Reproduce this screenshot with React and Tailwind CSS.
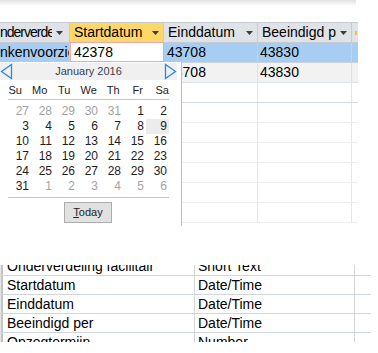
import React from "react";

const cols = [
    { w: "w-[70px]", head: "nderverdeling", first: true },
    { w: "w-[94px]", head: "Startdatum", active: true },
    { w: "w-[94px]", head: "Einddatum" },
    { w: "w-[94px]", head: "Beeindigd per" },
];

const weeks = [
    [27, 28, 29, 30, 31, 1, 2],
    [3, 4, 5, 6, 7, 8, 9],
    [10, 11, 12, 13, 14, 15, 16],
    [17, 18, 19, 20, 21, 22, 23],
    [24, 25, 26, 27, 28, 29, 30],
    [31, 1, 2, 3, 4, 5, 6],
];

const fields = [
    ["Onderverdeling facilitair", "Short Text"],
    ["Startdatum", "Date/Time"],
    ["Einddatum", "Date/Time"],
    ["Beeindigd per", "Date/Time"],
    ["Opzegtermijn", "Number"],
];

const SortArrow = () => (
    <svg width="7" height="4" viewBox="0 0 7 4" className="shrink-0">
        <path d="M0 0 L7 0 L3.5 4 Z" fill="#3c3c3c" />
    </svg>
);

const NavArrow = ({ dir }) => (
    <svg width="13" height="17" viewBox="0 0 13 17">
        {dir === "left" ? (
            <path d="M11.5 1.5 L1.5 8.5 L11.5 15.5 Z" fill="none" stroke="#2b88d8" strokeWidth="1.3" />
        ) : (
            <path d="M1.5 1.5 L11.5 8.5 L1.5 15.5 Z" fill="none" stroke="#2b88d8" strokeWidth="1.3" />
        )}
    </svg>
);

const Calendar = () => {
    return (
        <div className="absolute left-0 top-[62px] w-[182px] h-[164px] bg-white border-r border-[#bdbdbd] text-[#1c1c1c]">
            {/* month header */}
            <div className="mt-[1px] w-[177px] h-[17px] bg-[#f0f0f0] flex items-center justify-between">
                <NavArrow dir="left" />
                <span className="text-[11px] text-[#3f3f4f]">January 2016</span>
                <NavArrow dir="right" />
            </div>

            {/* day names */}
            <div className="ml-[3px] mt-[2px] grid grid-cols-[repeat(7,24.5px)] h-[16px] items-center text-[11px]">
                {["Su", "Mo", "Tu", "We", "Th", "Fr", "Sa"].map((d) => (
                    <span key={d} className="text-center">{d}</span>
                ))}
            </div>
            <div className="ml-[8px] mt-[1px] w-[161px] h-px bg-[#c4c4c4]" />

            {/* dates */}
            <div className="ml-[8px] mt-[4px] grid grid-cols-[repeat(7,23px)] text-[12px]">
                {weeks.map((week, wi) =>
                    week.map((day, di) => {
                        const muted = (wi === 0 && day > 20) || (wi === 5 && day < 10);
                        const selected = wi === 1 && di === 6;
                        return (
                            <span
                                key={`${wi}-${di}`}
                                className={`h-[15px] leading-[15px] text-right pr-[2px] ${muted ? "text-[#a3a3a3]" : ""} ${selected ? "bg-[#ececec]" : ""}`}
                            >
                                {day}
                            </span>
                        );
                    })
                )}
            </div>
            <div className="ml-[8px] mt-[3px] w-[161px] h-px bg-[#c4c4c4]" />

            {/* today button */}
            <div className="ml-[64px] mt-[4px] w-[48px] h-[21px] bg-[#e1e1e1] border border-[#adadad] flex items-center justify-center text-[11px]">
                <span><span className="underline">T</span>oday</span>
            </div>
        </div>
    );
};

export default function App() {
    return (
        <div className="relative w-[378px] h-[353px] bg-white overflow-hidden font-['Liberation_Sans',sans-serif] text-black">
            {/* window shadow */}
            <div className="h-[6px] w-[356px] bg-gradient-to-b from-[#e2e2e2] to-white" />
            <div className="h-[16px]" />

            {/* datasheet */}
            <div className="relative h-[204px] w-[358px] overflow-hidden">
                {/* header */}
                <div className="flex h-[21px] border-y border-[#c6cbd2] text-[14px]">
                    {cols.map((c) => (
                        <div
                            key={c.head}
                            className={`${c.w} flex items-center gap-[4px] border-r border-[#c6cbd2] ${c.active ? "bg-[#fdd868]" : "bg-[#dfe3e8]"} ${c.first ? "pl-0 pr-[6px]" : "pl-[4px] pr-[4px]"}`}
                        >
                            <span className={`flex-1 min-w-0 overflow-hidden whitespace-nowrap ${c.first ? "tracking-[-1px]" : ""}`}>
                                {c.head}
                            </span>
                            <SortArrow />
                        </div>
                    ))}
                    <div className="w-[6px] bg-[#dfe3e8] flex items-center">
                        <span className="ml-[3px] w-[2px] h-[4px] bg-[#f2c14e]" />
                    </div>
                </div>

                {/* selected row */}
                <div className="flex h-[20px] border-b border-[#c9d3df] text-[14px] bg-[#a7cef2]">
                    <div className="w-[70px] border-r border-[#c9d3df] overflow-hidden whitespace-nowrap flex items-center">
                        nkenvoorziening
                    </div>
                    <div className="w-[94px] bg-white border border-[#f2a6a6] -mt-px flex items-center pl-[3px]">
                        42378
                    </div>
                    <div className="w-[94px] border-r border-[#c9d3df] flex items-center pl-[3px]">43708</div>
                    <div className="w-[94px] border-r border-[#c9d3df] flex items-center pl-[2px]">43830</div>
                    <div className="w-[6px]" />
                </div>

                {/* second row */}
                <div className="flex h-[20px] border-b border-[#dde2e9] text-[14px] bg-[#f2f2f2]">
                    <div className="w-[70px] border-r border-[#dde2e9]" />
                    <div className="w-[94px] border-r border-[#dde2e9]" />
                    <div className="w-[94px] border-r border-[#dde2e9] flex items-center pl-[3px]">43708</div>
                    <div className="w-[94px] border-r border-[#dde2e9] flex items-center pl-[2px]">43830</div>
                    <div className="w-[6px]" />
                </div>

                {/* empty rows */}
                {[0, 1, 2, 3, 4, 5, 6].map((i) => (
                    <div
                        key={i}
                        className={`flex h-[20px] border-b ${i === 0 ? "border-[#d3dae4]" : "border-[#eceef2]"}`}
                    >
                        <div className="w-[70px] border-r border-[#e3e6eb]" />
                        <div className="w-[94px] border-r border-[#e3e6eb]" />
                        <div className="w-[94px] border-r border-[#e3e6eb]" />
                        <div className="w-[94px] border-r border-[#e3e6eb]" />
                        <div className="w-[6px]" />
                    </div>
                ))}
            </div>

            <Calendar />

            {/* design view field list */}
            <div className="mt-[39px] h-[77px] overflow-hidden">
                <div className="-mt-[8px] text-[14px]">
                    {fields.map(([name, type]) => (
                        <div key={name} className="flex h-[19px] border-b border-[#cfd6e1] w-[371px]">
                            <div className="w-[3px] bg-[#c3c3c3] border-l border-[#e6e6e6]" />
                            <div className="w-[192px] border-r border-[#d4d4d4] pl-[4px] flex items-center whitespace-nowrap">
                                {name}
                            </div>
                            <div className="w-[160px] border-r border-[#d4d4d4] pl-[3px] flex items-center whitespace-nowrap">
                                {type}
                            </div>
                        </div>
                    ))}
                </div>
            </div>
        </div>
    );
}
